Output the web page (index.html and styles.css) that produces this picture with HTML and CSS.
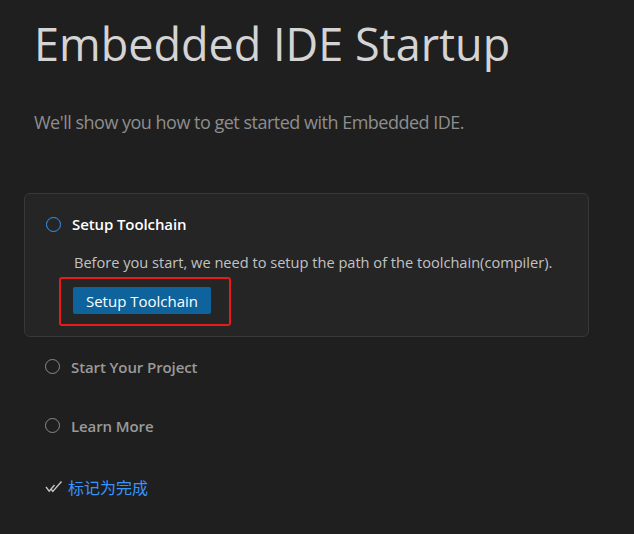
FILE: index.html
```html
<!DOCTYPE html>
<html>
<head>
<meta charset="utf-8">
<link rel="stylesheet" href="styles.css">
</head>
<body>
<div class="page">
  <h1 class="title">Embedded IDE Startup</h1>
  <p class="subtitle">We'll show you how to get started with Embedded IDE.</p>
  <div class="steps">
    <div class="card">
      <div class="step-head">
        <span class="circle active"></span>
        <span class="step-title">Setup Toolchain</span>
      </div>
      <p class="desc">Before you start, we need to setup the path of the toolchain(compiler).</p>
      <div class="highlight">
        <button class="btn">Setup Toolchain</button>
      </div>
    </div>
    <div class="step">
      <span class="circle"></span>
      <span class="step-title muted">Start Your Project</span>
    </div>
    <div class="step">
      <span class="circle"></span>
      <span class="step-title muted">Learn More</span>
    </div>
    <div class="done">
      <svg class="check" width="18" height="14" viewBox="0 0 18 14"><path d="M1 7 L4.2 11.2 L9.5 5" fill="none" stroke="#c5c5c5" stroke-width="1.4"/><path d="M6 9 L7.8 11.4 L16.5 1.5" fill="none" stroke="#c5c5c5" stroke-width="1.4"/></svg>
      <span class="done-text">标记为完成</span>
    </div>
  </div>
</div>
</body>
</html>
```
FILE: styles.css
```css
html, body {
  margin: 0;
  padding: 0;
  background: #1f1f1f;
}
body {
  font-family: "Open Sans", "Noto Sans CJK SC", sans-serif;
  color: #cccccc;
}
.page {
  padding: 14px 0 0 34px;
}
.title {
  margin: 0;
  font-weight: 400;
  font-size: 45px;
  line-height: 60px;
  color: #d4d4d4;
}
.subtitle {
  margin: 35px 0 0 0;
  font-size: 18px;
  line-height: 26px;
  color: #8e8e8e;
  letter-spacing: -0.5px;
}
.steps {
  margin: 58px 0 0 -10px;
  width: 565px;
}
.card {
  background: #252526;
  border: 1px solid #383838;
  border-radius: 6px;
  padding: 20px 20px 10px 21px;
}
.step-head, .step {
  display: flex;
  align-items: center;
  gap: 11px;
}
.circle {
  width: 13px;
  height: 13px;
  border: 1.5px solid #8a8a8a;
  border-radius: 50%;
  flex: none;
}
.circle.active {
  border-color: #3794ff;
}
.step-title {
  font-size: 15px;
  font-weight: 600;
  color: #ffffff;
  letter-spacing: -0.1px;
}
.step-title.muted {
  color: #9a9a9a;
}
.desc {
  margin: 18px 0 0 28px;
  font-size: 14.6px;
  line-height: 20px;
  color: #c2c2c2;
}
.highlight {
  display: inline-block;
  margin: 5px 0 0 13px;
  border: 2px solid #e81b1b;
  border-radius: 3px;
  padding: 8px 18px 10px 12px;
}
.btn {
  display: block;
  background: #0e639c;
  color: #ffffff;
  border: none;
  border-radius: 2px;
  font-family: "Open Sans", sans-serif;
  font-size: 15px;
  width: 138px;
  height: 27px;
  padding: 0;
}
.step {
  padding: 0 0 0 21px;
  height: 59px;
}
.done {
  display: flex;
  align-items: center;
  gap: 5px;
  padding-left: 21px;
  margin-top: 10px;
  height: 44px;
}
.done-text {
  font-size: 16px;
  color: #3794ff;
}
```
